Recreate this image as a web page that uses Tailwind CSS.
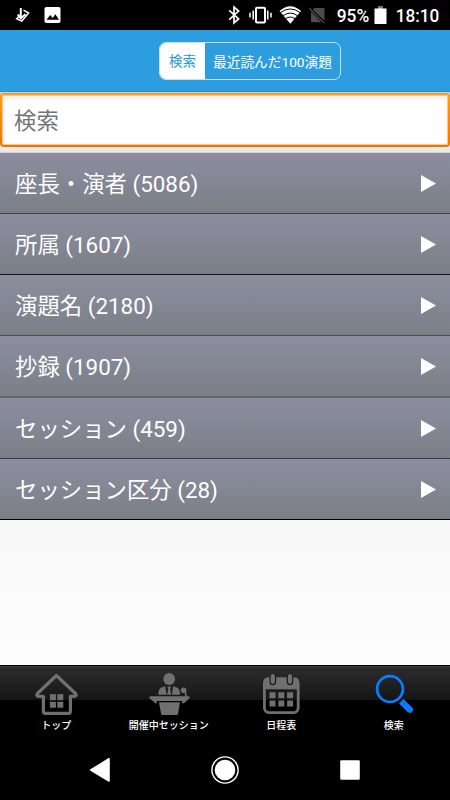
<!DOCTYPE html>
<html lang="ja">
<head>
<meta charset="utf-8">
<title>検索</title>
<script src="https://cdn.jsdelivr.net/npm/@tailwindcss/browser@4"></script>
</head>
<body class="w-[450px] h-[800px] overflow-hidden bg-black font-['Roboto','Noto_Sans_CJK_JP',sans-serif] text-white">
<div class="flex flex-col h-[800px]">
  <!-- Status bar -->
  <div class="h-[30px] shrink-0 flex items-center bg-black">
    <svg class="w-[450px] h-[30px]" viewBox="0 0 450 30">
      <path d="M23.5 10.2L28.6 13L21.8 21L16.6 18.8L18.8 16.4" fill="none" stroke="#fff" stroke-width="1.5"/>
      <path d="M20.8 8V16.5M17.8 14.5L20.8 18.2L25.5 14.2" fill="none" stroke="#fff" stroke-width="2"/>
      <rect x="44.5" y="7" width="16" height="16" rx="1.8" fill="#fff"/>
      <path d="M46.5 19.7L50.2 15L52.7 18L55.3 14.3L59 19.7Z" fill="#000"/>
      <path d="M229.2 10.3L238.6 19L234 22.9V7.1L238.6 11L229.2 19.7" fill="none" stroke="#fff" stroke-width="1.7"/>
      <rect x="256" y="7.8" width="9" height="14.8" rx="1" fill="none" stroke="#fff" stroke-width="2"/>
      <path d="M253.2 10.5V19.5M250 12.7V17.5M267.8 10.5V19.5M271 12.7V17.5" stroke="#fff" stroke-width="1.5"/>
      <path d="M279.5 11Q290.3 1.5 301 11L290.3 23.8Z" fill="#fff"/>
      <path d="M280.5 12.6Q290.3 5.3 300.2 12.6M283 15.7Q290.3 10.5 297.6 15.7M285.5 18.7Q290.3 15.4 295.1 18.7" fill="none" stroke="#000" stroke-width="1"/>
      <path d="M314.5 8H324.5V20.8L312.8 9.4ZM311 11.6L321.4 22.2H311Z" fill="#4c4c4c"/>
      <path d="M309.4 8.2L324.4 23.4" stroke="#4c4c4c" stroke-width="1.3"/>
      <text x="336.7" y="21.7" font-size="17.8" font-weight="500" textLength="32.5" lengthAdjust="spacingAndGlyphs" fill="#fff">95%</text>
      <path d="M378 6.4H383V8.4H386.5V24H374.5V8.4H378Z" fill="#fff"/>
      <path d="M378 6.4H383V8.4H378Z" fill="#777"/>
      <text x="395.8" y="21.7" font-size="17.8" font-weight="500" textLength="43.5" lengthAdjust="spacingAndGlyphs" fill="#fff">18:10</text>
    </svg>
  </div>

  <!-- Header with segmented control -->
  <div class="h-[62px] shrink-0 bg-[#2c9dde] border-b border-[#1a94dc] flex pl-[159px] pt-3">
    <div class="w-[182px] h-[38px] flex rounded-[7px] border border-[#c3e2f6] overflow-hidden text-[13.7px] leading-[38px]">
      <div class="w-[45px] shrink-0 bg-white text-[#2196dc] text-center text-[13.4px]">検索</div>
      <div class="flex-1 text-center whitespace-nowrap">最近読んだ100演題</div>
    </div>
  </div>

  <!-- Search field -->
  <div class="h-[61px] shrink-0 bg-gradient-to-b from-[#c3cdd5] from-[1px] via-[#f0f0f0] via-[5px] to-[#eaeaea] border-b border-[#cfcfcf] pt-px">
    <div class="h-[54px] rounded-[4px] bg-gradient-to-b from-[#ff9c18] to-[#f07400] px-[2px] pt-[2px] pb-[2px]">
      <div class="h-full bg-white rounded-[1px] border border-[#ffc98a] shadow-[inset_0_3px_5px_rgba(0,0,0,0.07)] pl-[11px] text-[22.4px] leading-[50px] text-[#757575]">検索</div>
    </div>
  </div>

  <!-- Categories -->
  <div class="shrink-0 text-[22.4px] leading-[61px]">
    <div class="h-[61px] flex items-center justify-between pl-[15px] pr-[14px] bg-gradient-to-b from-[#8c8ea0] to-[#7b7f86] border-b border-[#3f4145]"><span class="pt-[2px]">座長・演者 (5086)</span><svg class="w-[15px] h-[17px]" viewBox="0 0 15 17"><path d="M0 0L15 8.5L0 17Z" fill="#fff"/></svg></div>
    <div class="h-[61px] flex items-center justify-between pl-[15px] pr-[14px] bg-gradient-to-b from-[#8c8ea0] to-[#7b7f86] border-b border-[#141516]"><span class="pt-[2px]">所属 (1607)</span><svg class="w-[15px] h-[17px]" viewBox="0 0 15 17"><path d="M0 0L15 8.5L0 17Z" fill="#fff"/></svg></div>
    <div class="h-[61px] flex items-center justify-between pl-[15px] pr-[14px] bg-gradient-to-b from-[#8c8ea0] to-[#7b7f86] border-b border-[#4b4d51]"><span class="pt-[2px]">演題名 (2180)</span><svg class="w-[15px] h-[17px]" viewBox="0 0 15 17"><path d="M0 0L15 8.5L0 17Z" fill="#fff"/></svg></div>
    <div class="h-[62px] flex items-center justify-between pl-[15px] pr-[14px] bg-gradient-to-b from-[#8c8ea0] to-[#7b7f86] border-b-2 border-[#63666d]"><span class="pt-[2px]">抄録 (1907)</span><svg class="w-[15px] h-[17px]" viewBox="0 0 15 17"><path d="M0 0L15 8.5L0 17Z" fill="#fff"/></svg></div>
    <div class="h-[61px] flex items-center justify-between pl-[15px] pr-[14px] bg-gradient-to-b from-[#8c8ea0] to-[#7b7f86] border-b border-[#3a3b3f]"><span class="pt-[2px]">セッション (459)</span><svg class="w-[15px] h-[17px]" viewBox="0 0 15 17"><path d="M0 0L15 8.5L0 17Z" fill="#fff"/></svg></div>
    <div class="h-[61px] flex items-center justify-between pl-[15px] pr-[14px] bg-gradient-to-b from-[#8c8ea0] to-[#7b7f86] border-b border-black"><span class="pt-[2px]">セッション区分 (28)</span><svg class="w-[15px] h-[17px]" viewBox="0 0 15 17"><path d="M0 0L15 8.5L0 17Z" fill="#fff"/></svg></div>
  </div>

  <div class="flex-1 bg-gradient-to-b from-[#f8f8f8] to-[#fdfdfd]"></div>

  <!-- Tab bar -->
  <div class="h-[75px] shrink-0 border-t border-black bg-[linear-gradient(to_bottom,#3b3b3b_0px,#3b3b3b_1px,#2c2c2c_2px,#151515_34px,#000_34px)] grid grid-cols-4 text-[10px] font-medium leading-[14px] text-center">
    <div class="flex flex-col items-center gap-[3px] pt-[6px]">
      <svg class="w-[44px] h-[44px]" viewBox="0 0 44 44">
        <path d="M22 3.2L3 21.2Q1.2 24 4.5 24H9V39Q9 41 11 41H34Q36 41 36 39V24H39.5Q43 24 41 21.2Z" transform="translate(.4 .3)" fill="none" stroke="#707070" stroke-width="3.2" stroke-linejoin="round"/>
        <path d="M15.9 22.3h6v6h-6zM23.3 22.3h6v6h-6zM15.9 29.7h6v6h-6zM23.3 29.7h6v6h-6z" fill="#707070"/>
      </svg>
      <span>トップ</span>
    </div>
    <div class="flex flex-col items-center gap-[3px] pt-[6px]">
      <svg class="w-[44px] h-[44px]" viewBox="0 0 44 44" fill="#707070">
        <circle cx="22.2" cy="7" r="5.9"/>
        <path d="M18.2 14.2L13.8 15.8Q11.5 17 11.4 22.8H19.6ZM26.2 14.2L30.6 15.8Q32.9 17 33 22.8H24.8ZM20.5 14.4H23.9L23.2 17.2L24.2 22.8H20.2L21.2 17.2Z"/>
        <circle cx="36.6" cy="18.2" r="2.8"/>
        <path d="M37.6 19Q39.8 21.5 38.2 25" fill="none" stroke="#707070" stroke-width="1.5"/>
        <path d="M3.3 24.3H41.7Q43 24.3 42.7 26L37 31.2H34.7L35.5 29H9.5L10.3 31.2H8.3L2.3 26Q2 24.3 3.3 24.3Z"/>
        <path d="M12 30.2H33L31.1 41.5Q31 43 29.5 43H15.6Q14.1 43 14 41.5Z"/>
      </svg>
      <span>開催中セッション</span>
    </div>
    <div class="flex flex-col items-center gap-[3px] pt-[6px]">
      <svg class="w-[44px] h-[44px]" viewBox="0 0 44 44">
        <rect x="5.4" y="6.8" width="33.8" height="33.8" rx="4.5" fill="none" stroke="#707070" stroke-width="2.8"/>
        <path d="M4.5 17.3V10Q4.5 5.5 9 5.5H36Q40 5.5 40 10V17.3Z" fill="#707070"/>
        <path d="M13.8 5.2V9.9M31 5.2V9.9" stroke="#1b1b1b" stroke-width="6.6" stroke-linecap="round"/>
        <path d="M13.8 4.2V9.8M31 4.2V9.8" stroke="#707070" stroke-width="4.2" stroke-linecap="round"/>
        <path d="M10.5 20.2h6v6h-6zM19.3 20.2h6v6h-6zM28.1 20.2h6v6h-6zM10.5 28.5h6v6h-6zM19.3 28.5h6v6h-6zM28.1 28.5h6v6h-6z" fill="#707070"/>
      </svg>
      <span>日程表</span>
    </div>
    <div class="flex flex-col items-center gap-[3px] pt-[6px]">
      <svg class="w-[44px] h-[44px]" viewBox="0 0 44 44" fill="none" stroke="#0a7cff">
        <circle cx="18" cy="17" r="12.9" stroke-width="2.8"/>
        <path d="M29.2 29.2L37.8 37.6" stroke-width="6.2"/>
        <path d="M35 35L37.8 37.6" stroke-width="6.2" stroke-linecap="round"/>
      </svg>
      <span>検索</span>
    </div>
  </div>

  <!-- System navigation -->
  <div class="h-[60px] shrink-0 bg-black">
    <svg class="w-[450px] h-[60px]" viewBox="0 740 450 60" fill="#fff">
      <path d="M109 758.8V781L90.8 770Z" stroke="#fff" stroke-width="1.6" stroke-linejoin="round"/>
      <circle cx="225" cy="770" r="13.1" fill="none" stroke="#fff" stroke-width="1.4"/>
      <circle cx="225" cy="770" r="10.3"/>
      <rect x="340.2" y="760.3" width="19.6" height="19.4" rx="1"/>
    </svg>
  </div>
</div>
</body>
</html>
